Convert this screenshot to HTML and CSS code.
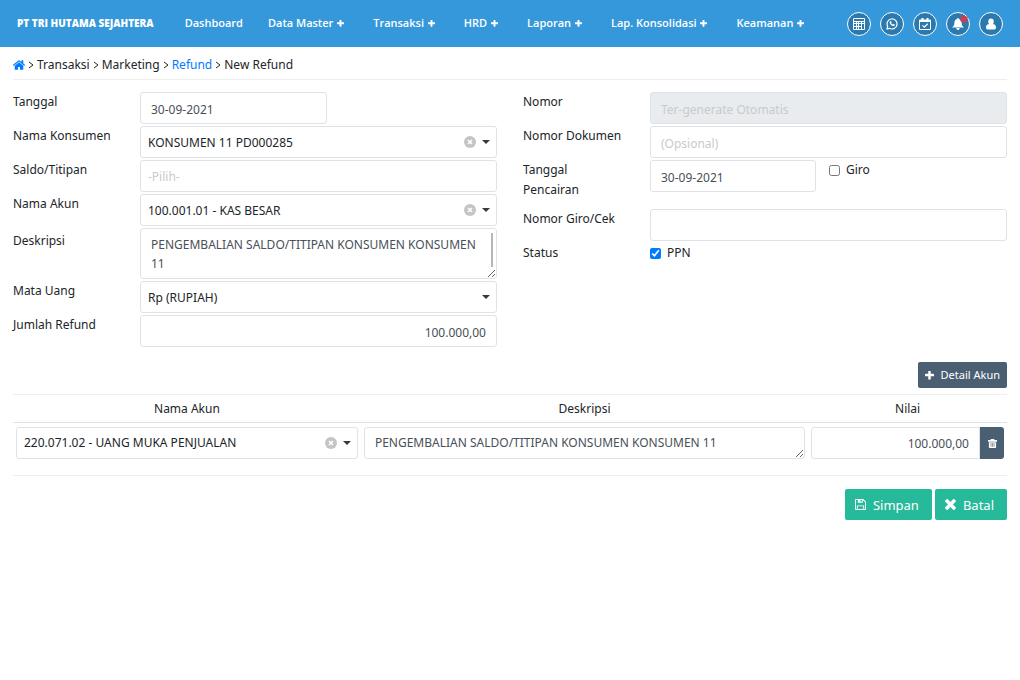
FILE: index.html
```
<!DOCTYPE html>
<html lang="id">
<head>
    <meta charset="UTF-8">
    <meta name="viewport" content="width=device-width, initial-scale=1.0">
    <title>New Refund</title>
    <link rel="stylesheet" href="styles.css">
</head>
<body>
    <!-- shared icons -->
    <svg class="sprite" aria-hidden="true">
        <symbol id="i-plus" viewBox="192 192 1408 1408"><path d="M1600 736v192q0 40-28 68t-68 28h-416v416q0 40-28 68t-68 28h-192q-40 0-68-28t-28-68v-416h-416q-40 0-68-28t-28-68v-192q0-40 28-68t68-28h416v-416q0-40 28-68t68-28h192q40 0 68 28t28 68v416h416q40 0 68 28t28 68z"/></symbol>
        <symbol id="i-times" viewBox="300 360 1200 1200"><path d="M1490 1322q0 40-28 68l-136 136q-28 28-68 28t-68-28l-294-294-294 294q-28 28-68 28t-68-28l-136-136q-28-28-28-68t28-68l294-294-294-294q-28-28-28-68t28-68l136-136q28-28 68-28t68 28l294 294 294-294q28-28 68-28t68 28l136 136q28 28 28 68t-28 68l-294 294 294 294q28 28 28 68z"/></symbol>
        <symbol id="i-clear" viewBox="0 0 12 12"><circle cx="6" cy="6" r="6"/><path d="M4 4l4 4M8 4l-4 4" fill="none" stroke="#fff" stroke-width="1.600"/></symbol>
    </svg>

    <header class="topbar">
        <a class="brand" href="#">PT TRI HUTAMA SEJAHTERA</a>
        <nav class="menu">
            <a href="#">Dashboard</a>
            <a href="#">Data Master <svg><use href="#i-plus"/></svg></a>
            <a href="#">Transaksi <svg><use href="#i-plus"/></svg></a>
            <a href="#">HRD <svg><use href="#i-plus"/></svg></a>
            <a href="#">Laporan <svg><use href="#i-plus"/></svg></a>
            <a href="#">Lap. Konsolidasi <svg><use href="#i-plus"/></svg></a>
            <a href="#">Keamanan <svg><use href="#i-plus"/></svg></a>
        </nav>
        <div class="tools">
            <button type="button" aria-label="Kalkulator">
                <svg viewBox="0 0 12 12"><path fill-rule="evenodd" d="M1 0h10q1 0 1 1v10q0 1-1 1H1q-1 0-1-1V1q0-1 1-1zM1 1v2h10V1zM1 4v1h2V4zM4 4v1h1V4zM6 4v1h2V4zM9 4v1h2V4zM1 6v2h2V6zM4 6v2h1V6zM6 6v2h2V6zM9 6v5h2V6zM1 9v2h2V9zM4 9v2h1V9zM6 9v2h2V9z"/></svg>
            </button>
            <button type="button" aria-label="WhatsApp">
                <svg viewBox="0 0 12 12"><path d="M1 11l.7-2.6A5 5 0 1 1 3.600 10.300z" fill="none" stroke="#fff" stroke-width="1.200"/><path d="M4.200 3.200c.5-.4.900-.2 1.100.3l.3.8c.1.300-.4.700-.4.900.3.600.9 1.100 1.500 1.400.3 0 .6-.7.900-.6l1.100.6c.4.300-.1 1.300-.8 1.500-1.500.5-4.200-1.700-4.300-3.500 0-.6.3-1.100.6-1.400z"/></svg>
            </button>
            <button type="button" aria-label="Agenda">
                <svg viewBox="0 0 12 12"><path fill-rule="evenodd" d="M1 1.500h1.500V0h2v1.500h3V0h2v1.500H11q1 0 1 1V11q0 1-1 1H1q-1 0-1-1V2.500q0-1 1-1zM1 4v7h10V4z"/><path d="M3.500 7.300l1.800 1.800 3.400-3.300" fill="none" stroke="#fff" stroke-width="1.200"/></svg>
            </button>
            <button type="button" aria-label="Notifikasi">
                <svg viewBox="0 0 12 12"><path d="M6 0c.6 0 .8.400.8.900C8.600 1.300 9.600 2.800 9.600 4.500c0 2.500.7 3.800 2.400 5H0c1.700-1.200 2.400-2.500 2.400-5 0-1.700 1-3.200 2.800-3.600C5.200.4 5.400 0 6 0zM4.300 10h3.400c0 1.200-.7 2-1.700 2s-1.700-.8-1.700-2z"/></svg>
                <svg class="mark" viewBox="0 0 8 8"><path d="M4 0v8M.5 2l7 4M.5 6l7-4" stroke="#e8323f" stroke-width="2"/></svg>
            </button>
            <button type="button" aria-label="Akun">
                <svg viewBox="0 0 12 12"><path d="M6 .5c1.700 0 2.800 1.200 2.800 2.900 0 1-.3 1.900-.8 2.500C10.300 6.100 11 7.700 11 9.500c0 1.300-.7 2-1.700 2H2.700c-1 0-1.700-.7-1.700-2 0-1.800.7-3.400 3-3.600-.5-.6-.8-1.500-.8-2.500C3.200 1.700 4.300.5 6 .5z"/></svg>
            </button>
        </div>
    </header>

    <main class="content">
        <nav class="breadcrumb">
            <a href="#" aria-label="Home"><svg viewBox="90 250 1612 1290"><path d="M1472 992v480q0 26-19 45t-45 19h-384v-384h-256v384h-384q-26 0-45-19t-19-45v-480q0-1 .5-3t.5-3l575-474 575 474q1 2 1 6zm223-69l-62 74q-8 9-21 11h-3q-13 0-21-7l-692-577-692 577q-12 8-24 7-13-2-21-11l-62-74q-8-10-7-23.500t11-21.500l719-599q32-26 76-26t76 26l244 204v-195q0-14 9-23t23-9h192q14 0 23 9t9 23v408l219 182q10 8 11 21.500t-7 23.500z"/></svg></a>
            <svg class="sep" viewBox="0 0 6 8"><path d="M1 1l4 3-4 3"/></svg>
            <span>Transaksi</span>
            <svg class="sep" viewBox="0 0 6 8"><path d="M1 1l4 3-4 3"/></svg>
            <span>Marketing</span>
            <svg class="sep" viewBox="0 0 6 8"><path d="M1 1l4 3-4 3"/></svg>
            <a href="#">Refund</a>
            <svg class="sep" viewBox="0 0 6 8"><path d="M1 1l4 3-4 3"/></svg>
            <span>New Refund</span>
        </nav>

        <form id="refundForm">
            <div class="columns">
                <div class="column">
                    <div class="form-row">
                        <label for="tanggal">Tanggal</label>
                        <div class="field"><input type="text" class="control date" id="tanggal" value="30-09-2021"></div>
                    </div>
                    <div class="form-row">
                        <label for="konsumen">Nama Konsumen</label>
                        <div class="field picker">
                            <select class="control" id="konsumen"><option>KONSUMEN 11 PD000285</option></select>
                            <button type="button" class="clear" aria-label="Hapus pilihan"><svg><use href="#i-clear"/></svg></button>
                        </div>
                    </div>
                    <div class="form-row">
                        <label for="saldo">Saldo/Titipan</label>
                        <div class="field"><select class="control empty" id="saldo"><option>-Pilih-</option></select></div>
                    </div>
                    <div class="form-row">
                        <label for="akun">Nama Akun</label>
                        <div class="field picker">
                            <select class="control" id="akun"><option>100.001.01 - KAS BESAR</option></select>
                            <button type="button" class="clear" aria-label="Hapus pilihan"><svg><use href="#i-clear"/></svg></button>
                        </div>
                    </div>
                    <div class="form-row tall">
                        <label for="deskripsi">Deskripsi</label>
                        <div class="field scroller"><textarea class="control" id="deskripsi">PENGEMBALIAN SALDO/TITIPAN KONSUMEN KONSUMEN 11</textarea></div>
                    </div>
                    <div class="form-row">
                        <label for="mataUang">Mata Uang</label>
                        <div class="field picker"><select class="control" id="mataUang"><option>Rp (RUPIAH)</option></select></div>
                    </div>
                    <div class="form-row">
                        <label for="jumlah">Jumlah Refund</label>
                        <div class="field"><input type="text" class="control number" id="jumlah" value="100.000,00"></div>
                    </div>
                </div>

                <div class="column">
                    <div class="form-row">
                        <label for="nomor">Nomor</label>
                        <div class="field"><input type="text" class="control" id="nomor" placeholder="Ter-generate Otomatis" disabled></div>
                    </div>
                    <div class="form-row">
                        <label for="dokumen">Nomor Dokumen</label>
                        <div class="field"><input type="text" class="control" id="dokumen" placeholder="(Opsional)"></div>
                    </div>
                    <div class="form-row">
                        <label for="pencairan">Tanggal Pencairan</label>
                        <div class="field split">
                            <input type="text" class="control" id="pencairan" value="30-09-2021">
                            <label class="check"><input type="checkbox" name="giro">Giro</label>
                        </div>
                    </div>
                    <div class="form-row">
                        <label for="nomorGiro">Nomor Giro/Cek</label>
                        <div class="field"><input type="text" class="control" id="nomorGiro"></div>
                    </div>
                    <div class="form-row">
                        <span class="label">Status</span>
                        <div class="field"><label class="check"><input type="checkbox" name="ppn" checked>PPN</label></div>
                    </div>
                </div>
            </div>

            <div class="actions">
                <button type="button" class="btn dark"><svg><use href="#i-plus"/></svg>Detail Akun</button>
            </div>

            <table class="detail">
                <thead>
                    <tr>
                        <th class="col-akun">Nama Akun</th>
                        <th class="col-deskripsi">Deskripsi</th>
                        <th class="col-nilai">Nilai</th>
                    </tr>
                </thead>
                <tbody>
                    <tr>
                        <td>
                            <div class="picker">
                                <select class="control" aria-label="Nama Akun"><option>220.071.02 - UANG MUKA PENJUALAN</option></select>
                                <button type="button" class="clear" aria-label="Hapus pilihan"><svg><use href="#i-clear"/></svg></button>
                            </div>
                        </td>
                        <td><textarea class="control" rows="1" aria-label="Deskripsi">PENGEMBALIAN SALDO/TITIPAN KONSUMEN KONSUMEN 11</textarea></td>
                        <td>
                            <div class="group">
                                <input type="text" class="control number" aria-label="Nilai" value="100.000,00">
                                <button type="button" class="remove" aria-label="Hapus baris"><svg viewBox="0 0 10 10"><path fill-rule="evenodd" d="M3 1V0h4v1h3v2H0V1zM1 3.500h8V9q0 1-1 1H2q-1 0-1-1zM3 4.500v4h.7v-4zM4.700 4.500v4h.7v-4zM6.400 4.500v4h.7v-4z"/></svg></button>
                            </div>
                        </td>
                    </tr>
                </tbody>
            </table>

            <div class="actions footer">
                <button type="submit" class="btn green"><svg viewBox="0 0 12 12"><path fill-rule="evenodd" d="M1 0h8l3 3v8q0 1-1 1H1q-1 0-1-1V1q0-1 1-1zM1 1v10h1V7h8v4h1V3.500L8.500 1v3H3V1zM6 1v2h1.500V1zM3 8v3h6V8z"/></svg>Simpan</button>
                <button type="button" class="btn green"><svg><use href="#i-times"/></svg>Batal</button>
            </div>
        </form>
    </main>
</body>
</html>
```
FILE: styles.css
```
* {
    box-sizing: border-box;
}

body {
    margin: 0;
    font-family: 'Segoe UI', 'Noto Sans', sans-serif;
    font-size: 12px;
    line-height: 20px;
    color: #212529;
    background-color: #fff;
}

a {
    color: #007bff;
    text-decoration: none;
}

button, input, select, textarea {
    font: inherit;
    margin: 0;
}

button {
    cursor: pointer;
}

svg {
    fill: currentColor;
}

.sprite {
    display: none;
}

/* top bar */
.topbar {
    display: flex;
    align-items: center;
    height: 47px;
    padding: 0 17px;
    background-color: #3498db;
    font-family: 'Open Sans', sans-serif;
    font-size: 11px;
}

.topbar a {
    padding-bottom: 2px;
    color: #fff;
    white-space: nowrap;
}

.brand {
    font-size: 10px;
    font-weight: 800;
    margin-right: 31px;
}

.menu {
    display: flex;
    gap: 29px;
    font-weight: 600;
}

.menu a:first-child {
    margin-right: -4px;
}

.menu svg {
    width: 7px;
    height: 7px;
    margin-left: 1px;
}

.tools {
    display: flex;
    gap: 9px;
    margin-left: auto;
}

.tools button {
    position: relative;
    display: flex;
    align-items: center;
    justify-content: center;
    width: 24px;
    height: 24px;
    padding: 0;
    border: 1px solid #fff;
    border-radius: 50%;
    background-color: #2a7ab0;
    color: #fff;
}

.tools svg {
    width: 12px;
    height: 12px;
}

.tools .mark {
    position: absolute;
    top: 2px;
    right: 1px;
    width: 8px;
    height: 8px;
}

/* breadcrumb */
.content {
    padding: 8px 13px;
}

.breadcrumb {
    display: flex;
    align-items: center;
    gap: 3px;
    padding-bottom: 4px;
    border-bottom: 1px solid #eee;
}

.breadcrumb a {
    display: flex;
}

.breadcrumb svg {
    width: 12px;
    height: 10px;
}

.breadcrumb .sep {
    width: 6px;
    height: 8px;
    fill: none;
    stroke: #212529;
}

/* form */
.columns {
    display: grid;
    grid-template-columns: 1fr 1fr;
    gap: 26px;
    padding-top: 12px;
}

.column {
    display: flex;
    flex-direction: column;
    gap: 2px;
}

.form-row {
    display: flex;
    align-items: flex-start;
}

.form-row > label,
.form-row > .label {
    flex: 0 0 127px;
    padding-right: 26px;
}

.form-row > label {
    padding-bottom: 7px;
}

.form-row.tall > label {
    padding-top: 3px;
}

.field {
    flex: 1;
    min-width: 0;
}

.control {
    display: block;
    width: 100%;
    height: 32px;
    padding: 2px 10px 0;
    border: 1px solid #dfe2e6;
    border-radius: 3px;
    background-color: #fff;
    color: #495057;
    outline: none;
}

.control::placeholder {
    color: #c8cacc;
}

.control:disabled {
    background-color: #e9ecef;
}

.control.date {
    width: 187px;
}

.control.number {
    text-align: right;
}

select.control {
    appearance: none;
    padding: 2px 7px 0;
    color: #212529;
}

select.control.empty {
    color: #c8cacc;
}

textarea.control {
    height: 51px;
    padding: 6px 10px 4px;
    line-height: 19px;
}

/* thin scroll thumb */
.scroller {
    position: relative;
}

.scroller::after {
    content: '';
    position: absolute;
    top: 5px;
    right: 4px;
    width: 2px;
    height: 34px;
    background-color: #b5b8bb;
    pointer-events: none;
}

.picker {
    position: relative;
}

/* drop-down arrow */
.picker::after {
    content: '';
    position: absolute;
    top: 14px;
    right: 7px;
    border: 4px solid transparent;
    border-top-color: #343a40;
    border-bottom: 0;
    pointer-events: none;
}

.clear {
    position: absolute;
    top: 10px;
    right: 21px;
    width: 12px;
    height: 12px;
    padding: 0;
    border: 0;
    background: none;
    color: #c4c4c4;
}

.clear svg {
    display: block;
    width: 12px;
    height: 12px;
}

.split {
    display: flex;
    align-items: flex-start;
    gap: 13px;
}

.split .control {
    width: 166px;
}

.check {
    display: inline-flex;
    align-items: center;
    gap: 6px;
}

.check input {
    width: 11px;
    height: 11px;
    accent-color: #007bff;
}

/* buttons */
.actions {
    display: flex;
    justify-content: flex-end;
    gap: 3px;
    padding: 15px 0 6px;
}

.btn {
    display: flex;
    align-items: center;
    gap: 7px;
    height: 31px;
    padding: 0 14px 0 11px;
    border: 0;
    border-radius: 2px;
    color: #fff;
}

.btn svg {
    width: 11px;
    height: 11px;
}

.btn.dark {
    height: 26px;
    padding: 0 7px;
    background-color: #4b5f73;
    font-size: 11px;
}

.btn.dark svg {
    width: 9px;
    height: 9px;
}

.btn.green {
    background-color: #26b99a;
    font-size: 13px;
    padding: 0 13px 0 10px;
}

/* detail table */
.detail {
    width: 100%;
    table-layout: fixed;
    border-collapse: collapse;
}

.detail th {
    padding: 4px 4px 3px;
    border-top: 1px solid #eee;
    border-bottom: 1px solid #dee2e6;
    font-weight: 400;
}

.detail td {
    padding: 4px 3px 3px;
    vertical-align: top;
}

.detail .control {
    padding-top: 0;
}

.detail textarea.control {
    height: 32px;
    padding-top: 5px;
}

.col-akun {
    width: 35%;
}

.col-deskripsi {
    width: 45%;
}

.col-nilai {
    width: 20%;
}

.group {
    display: flex;
}

.group .control {
    flex: 1;
    min-width: 0;
    border-radius: 3px 0 0 3px;
}

.remove {
    display: flex;
    align-items: center;
    justify-content: center;
    width: 24px;
    padding: 0;
    border: 0;
    border-radius: 0 3px 3px 0;
    background-color: #4b5f73;
    color: #fff;
}

.remove svg {
    width: 9px;
    height: 9px;
}

.footer {
    margin-top: 13px;
    padding-top: 13px;
    border-top: 1px solid #eee;
}
```
